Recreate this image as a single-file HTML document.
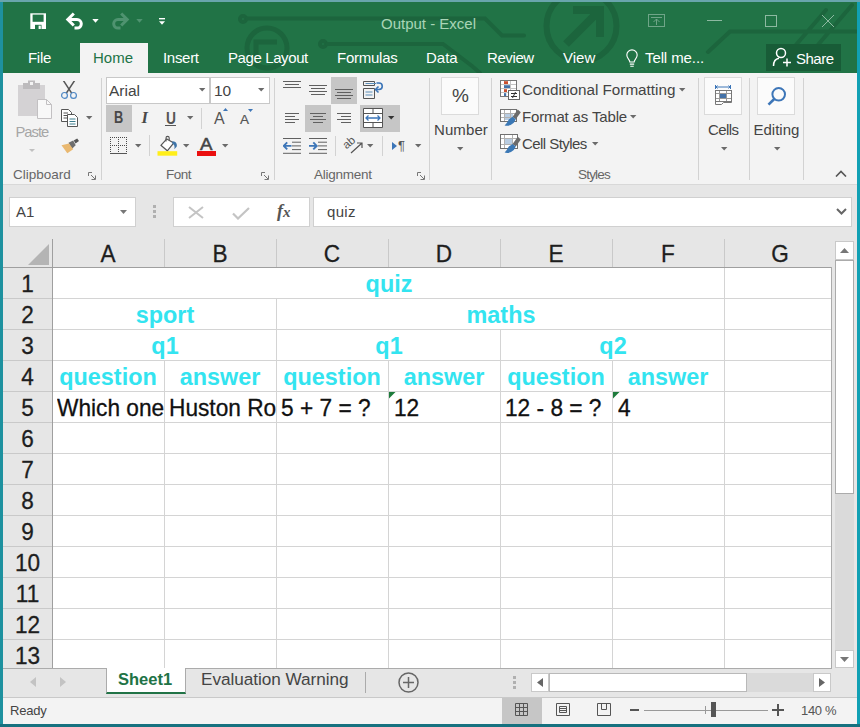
<!DOCTYPE html>
<html>
<head>
<meta charset="utf-8">
<title>Output - Excel</title>
<style>
*{box-sizing:border-box;margin:0;padding:0}
html,body{width:860px;height:727px;overflow:hidden}
body{background:linear-gradient(90deg,#1e919f 0,#1e919f 50%,#11a0b4 50%,#11a0b4 100%);font-family:"Liberation Sans",sans-serif;position:relative}
#win{position:absolute;left:3px;top:2px;width:854px;height:722px;background:#e6e6e6;overflow:hidden}
#pg{position:absolute;left:-3px;top:-2px;width:860px;height:727px}
#pg div,#pg svg{position:absolute}
.t{white-space:nowrap;line-height:1}
.tab{color:#fff;font-size:15px;top:50px}
.rl{color:#666;font-size:13.5px;top:168px}
.rt{color:#444;font-size:15px}
.sep{width:1px;background:#d2d2d2}
.box{background:#fff;border:1px solid #c8c8c8}
.sel{background:#c6c6c6}
.ch{-webkit-text-stroke:0.3px #1e1e1e;color:#1e1e1e;font-size:24px;top:242px;width:112px;text-align:center;transform:scaleX(0.94)}
.rh{-webkit-text-stroke:0.3px #1e1e1e;color:#1e1e1e;font-size:24px;left:3px;width:49px;text-align:center;transform:scaleX(0.94)}
.vl{width:1px;background:#d4d4d4;top:268px;height:400px}
.hl{height:1px;background:#d4d4d4;left:53px;width:779px}
.cy{color:#33e4f0;font-weight:bold;font-size:23.4px;text-align:center}
.cc{overflow:hidden;height:30px}
.ct{-webkit-text-stroke:0.3px #111;color:#111;font-size:24px;transform:scaleX(0.945);transform-origin:left top;left:0;top:0}
</style>
</head>
<body>
<div style="position:absolute;left:0;top:0;width:860px;height:2px;background:#69a5ac"></div>
<div style="position:absolute;left:0;top:724px;width:860px;height:3px;background:#16717f"></div>
<div id="win"><div id="pg">

<div style="left:3px;top:2px;width:854px;height:71px;background:#217346"></div>
<svg style="left:3px;top:2px" width="854" height="71" viewBox="3 2 854 71" fill="none" stroke="#1c653d" stroke-width="4" stroke-linecap="round">
<circle cx="243" cy="19" r="3"/><path d="M247 18.500H485L502 35.500H524"/>
<circle cx="323" cy="44" r="3"/><path d="M327 44H443L472 66L480 73"/>
<circle cx="267" cy="48" r="20" stroke-width="5"/><path d="M256 60V42H277" stroke-width="5" stroke-linecap="butt"/>
<circle cx="581.500" cy="26" r="35" stroke-width="6"/><path d="M566 44L596 14M573 10H600V37" stroke-width="8" stroke-linecap="butt"/>
<path d="M708 52L730 31.500H856M795 46L826 10M817 46L852 5"/>
</svg>
<div style="left:80px;top:43px;width:68px;height:31px;background:#f3f3f3"></div>
<svg style="left:30px;top:13px" width="17" height="17" viewBox="0 0 17 17"><rect x="0.300" y="0.300" width="15.700" height="15.700" fill="#fff"/><rect x="2.600" y="1.600" width="11" height="7.200" fill="#217346"/><rect x="5" y="11.800" width="6.500" height="4.200" fill="#217346"/><rect x="8.600" y="12.600" width="2.200" height="3.400" fill="#fff"/></svg>
<svg style="left:65px;top:12px" width="21" height="19" viewBox="0 0 21 19" fill="none" stroke="#fff" stroke-width="3"><path d="M3.500 7.500H12A4.300 4.300 0 0 1 12 16.100H9.500" stroke-linecap="butt"/><path d="M8.800 1.500L2.800 7.500L8.800 13.500" stroke-linejoin="miter"/></svg>
<svg style="left:92px;top:19px" width="7" height="4"><path d="M0.300 0H6.700L3.500 3.700Z" fill="#fff"/></svg>
<svg style="left:109px;top:12px" width="21" height="19" viewBox="0 0 21 19" fill="none" stroke="#4f9370" stroke-width="3"><path d="M17.500 7.500H9A4.300 4.300 0 0 0 9 16.100H11.500"/><path d="M12.200 1.500L18.200 7.500L12.200 13.500"/></svg>
<svg style="left:136px;top:19px" width="7" height="4"><path d="M0.300 0H6.700L3.500 3.700Z" fill="#4f9370"/></svg>
<svg style="left:159px;top:18px" width="6" height="8"><path d="M0 0.700H6" stroke="#fff" stroke-width="1.400"/><path d="M0 3.200H6L3 6.700Z" fill="#fff"/></svg>
<div class="t" style="left:381px;top:16px;font-size:15px;color:#a9d5b6">Output - Excel</div>
<svg style="left:640px;top:10px" width="200" height="24" viewBox="640 10 200 24" fill="none" stroke="#6fa588" stroke-width="1">
<rect x="648.5" y="14.5" width="16" height="12"/><path d="M651 17.5H662M656.5 25V19M653.5 22L656.5 19L659.5 22"/>
<path d="M707 20.5H722" stroke="#8db9a1"/>
<rect x="765.5" y="15.5" width="11" height="11" stroke="#8db9a1"/>
<path d="M822 15L834 27M834 15L822 27" stroke="#8db9a1"/>
</svg>
<div class="t tab" style="left:28px;color:#fff;letter-spacing:-0.3px">File</div>
<div class="t tab" style="left:93px;color:#217346;letter-spacing:0px">Home</div>
<div class="t tab" style="left:163px;color:#fff;letter-spacing:-0.3px">Insert</div>
<div class="t tab" style="left:228px;color:#fff;letter-spacing:-0.4px">Page Layout</div>
<div class="t tab" style="left:337px;color:#fff;letter-spacing:-0.25px">Formulas</div>
<div class="t tab" style="left:426px;color:#fff;letter-spacing:0px">Data</div>
<div class="t tab" style="left:487px;color:#fff;letter-spacing:-0.4px">Review</div>
<div class="t tab" style="left:563px;color:#fff;letter-spacing:0px">View</div>
<div class="t tab" style="left:645px;color:#fff;letter-spacing:-0.1px">Tell me...</div>
<svg style="left:625px;top:49px" width="14" height="19" viewBox="0 0 16 22" fill="none" stroke="#fff" stroke-width="1.3"><path d="M5.5 15C5.5 12 2 11 2 7A6 6 0 0 1 14 7C14 11 10.5 12 10.5 15Z"/><path d="M5.5 17.5H10.5M6 20H10"/></svg>
<div style="left:766px;top:44px;width:75px;height:27px;background:#185c37"></div>
<svg style="left:772px;top:47px" width="22" height="20" viewBox="0 0 22 20" fill="none" stroke="#fff" stroke-width="1.5"><circle cx="9" cy="6" r="4.5"/><path d="M1.5 19C1.5 13 5 11.5 7 11.2"/><path d="M11 15.5H19M15 11.5V19.5"/></svg>
<div class="t tab" style="left:796px;top:51px;letter-spacing:-0.5px">Share</div>
<div style="left:3px;top:73px;width:854px;height:111px;background:#f3f3f3"></div>
<div style="left:3px;top:184px;width:854px;height:1px;background:#d8d8d8"></div>
<svg style="left:17px;top:80px" width="36" height="40" viewBox="17 80 36 40">
<rect x="18" y="85" width="27" height="31" fill="#d4d2d4"/><rect x="23" y="83" width="17" height="6" fill="#bdbbbd"/><rect x="28" y="80.5" width="7" height="5" fill="#bdbbbd"/><rect x="30" y="82" width="3" height="3" fill="#f3f3f3"/>
<path d="M37.500 99.500H46.500L51.500 104.500V118.500H37.500Z" fill="#f8f8f8" stroke="#c2c0c2"/><path d="M46.500 99.500V104.500H51.500" fill="none" stroke="#c2c0c2"/>
</svg>
<div class="t" style="left:15.500px;top:124.500px;font-size:14.8px;color:#a6a6a6;letter-spacing:-1px">Paste</div>
<svg style="left:29px;top:149.3px" width="7" height="4"><path d="M0 0H6L3.0 3Z" fill="#c0c0c0"/></svg>
<svg style="left:60px;top:80px" width="18" height="20" viewBox="0 0 18 20" fill="none"><path d="M2.800 1L4.600 1L12.300 12.800L11 13.600Z" fill="#555"/><path d="M15.200 1L13.400 1L5.700 12.800L7 13.600Z" fill="#555"/><circle cx="4.500" cy="15.400" r="2.900" stroke="#4e87c4" stroke-width="1.200"/><circle cx="13.500" cy="15.400" r="2.900" stroke="#4e87c4" stroke-width="1.200"/></svg>
<svg style="left:60px;top:108px" width="19" height="20" viewBox="0 0 19 20" fill="#fff" stroke="#555" stroke-width="1"><path d="M1.500 1.500H8.500L11.500 4.500V13.500H1.500Z"/><path d="M3.500 5H8M3.500 7.500H8M3.500 10H7" stroke="#555"/><path d="M7.500 6.500H14.500L17.500 9.500V18.500H7.500Z"/><path d="M9.500 11H15.500M9.500 13.500H15.500M9.500 16H15.500" stroke="#3b7d8d"/></svg>
<svg style="left:86px;top:116.3px" width="7.4" height="4.6"><path d="M0 0H6.4L3.2 3.6Z" fill="#6a6a6a"/></svg>
<svg style="left:61px;top:138px" width="19" height="16" viewBox="0 0 19 16"><path d="M12.700 2.500L16.200 0.400L18 3.100L14.500 5.400Z" fill="#555"/><path d="M7.500 4.800L12.200 2.500L14.700 7.200L11 10.700Z" fill="#6e6e6e"/><path d="M0.500 7.200L8 5.400L12.200 11.300L6.300 15.200Z" fill="#e9b870"/></svg>
<div class="t rl" style="left:13px">Clipboard</div>
<svg style="left:88px;top:172px" width="8" height="8" viewBox="0 0 8 8" fill="none" stroke="#777" stroke-width="1"><path d="M0.5 4V0.5H4"/><path d="M3 3L7 7M7.5 3.5V7.5H3.5"/></svg>
<div class="sep" style="left:101px;top:78px;height:102px"></div>
<div class="box" style="left:106px;top:77px;width:104px;height:27px"></div>
<div class="box" style="left:210px;top:77px;width:60px;height:27px"></div>
<div class="t rt" style="left:109px;top:83px;font-size:15.5px">Arial</div>
<div class="t rt" style="left:214px;top:83px;font-size:15.5px">10</div>
<svg style="left:199px;top:88.3px" width="7.4" height="4.6"><path d="M0 0H6.4L3.2 3.6Z" fill="#6a6a6a"/></svg>
<svg style="left:258px;top:88.3px" width="7.4" height="4.6"><path d="M0 0H6.4L3.2 3.6Z" fill="#6a6a6a"/></svg>
<div class="sel" style="left:106px;top:105px;width:26px;height:27px"></div>
<div class="t" style="left:113.5px;top:109.5px;font-size:16px;font-weight:bold;color:#484848;transform:scaleX(0.8);transform-origin:left top">B</div>
<div class="t" style="left:141.5px;top:109.5px;font-size:16.5px;font-style:italic;font-weight:bold;color:#484848;font-family:'Liberation Serif',serif">I</div>
<div class="t" style="left:165.5px;top:110.5px;font-size:16px;font-weight:bold;color:#555;transform:scaleX(0.86);transform-origin:left top">U</div>
<div style="left:165px;top:125px;width:11px;height:1px;background:#555"></div>
<svg style="left:187px;top:116.3px" width="7.4" height="4.6"><path d="M0 0H6.4L3.2 3.6Z" fill="#6a6a6a"/></svg>
<div class="sep" style="left:201px;top:108px;height:21px"></div>
<div class="t" style="left:214px;top:111px;font-size:16px;color:#555">A</div>
<svg style="left:223px;top:108px" width="5" height="3"><path d="M0 3H5L2.5 0Z" fill="#3d76b8"/></svg>
<div class="t" style="left:240px;top:113px;font-size:13.5px;color:#555;-webkit-text-stroke:0.2px #555">A</div>
<svg style="left:248px;top:109px" width="5" height="3"><path d="M0 0H5L2.5 3Z" fill="#3d76b8"/></svg>
<svg style="left:110px;top:137px" width="17" height="18" viewBox="0 0 17 18" fill="none" stroke="#4a4a4a" stroke-width="1" stroke-dasharray="1 1"><path d="M0 0.500H17M0.500 0V16M8.500 0V16M16.500 0V16M0 8.500H17"/><path d="M0 16.500H17" stroke-dasharray="none" stroke="#555"/></svg>
<svg style="left:135px;top:144.3px" width="7.4" height="4.6"><path d="M0 0H6.4L3.2 3.6Z" fill="#6a6a6a"/></svg>
<div class="sep" style="left:149px;top:135px;height:21px"></div>
<svg style="left:156.500px;top:134px" width="21" height="23" viewBox="0 0 21 23"><path d="M3.900 11.300L9.800 4.900L16.800 8.900L10.300 16.800Z" fill="#fff" stroke="#555" stroke-width="1.200" stroke-linejoin="round"/><path d="M9 7.500V4A1.600 1.600 0 0 1 12.200 4V6.200" stroke="#555" stroke-width="1.100" fill="none"/><path d="M15.300 7.200C18.500 6.800 20.800 10 19.600 12.800L17.300 15.200C18 12.500 17.500 10.500 15.300 9.500Z" fill="#3f74a8"/><rect x="0.500" y="17.200" width="19.700" height="4.500" fill="#ffee1a"/></svg>
<svg style="left:183px;top:144.3px" width="7.4" height="4.6"><path d="M0 0H6.4L3.2 3.6Z" fill="#6a6a6a"/></svg>
<div class="t" style="left:199.500px;top:135.500px;font-size:16.5px;color:#444;-webkit-text-stroke:0.5px #444;transform:scaleX(1.13);transform-origin:left top">A</div>
<div style="left:196.500px;top:151.200px;width:19.500px;height:4.500px;background:#ea0f0f"></div>
<svg style="left:222px;top:144.3px" width="7.4" height="4.6"><path d="M0 0H6.4L3.2 3.6Z" fill="#6a6a6a"/></svg>
<div class="t rl" style="left:166px;letter-spacing:-0.5px">Font</div>
<svg style="left:261px;top:172px" width="8" height="8" viewBox="0 0 8 8" fill="none" stroke="#777" stroke-width="1"><path d="M0.5 4V0.5H4"/><path d="M3 3L7 7M7.5 3.5V7.5H3.5"/></svg>
<div class="sep" style="left:274px;top:78px;height:102px"></div>
<div class="sel" style="left:331px;top:77px;width:26px;height:27px"></div>
<div class="sel" style="left:305px;top:105px;width:26px;height:27px"></div>
<div class="sel" style="left:360px;top:105px;width:40px;height:27px"></div>
<svg style="left:283px;top:81px" width="18" height="11" stroke="#606060" stroke-width="1"><path d="M0.0 0.5H18.0"/><path d="M2.0 3.5H16.0"/><path d="M0.0 6.5H18.0"/></svg>
<svg style="left:309px;top:85px" width="18" height="14" stroke="#606060" stroke-width="1"><path d="M0.0 0.5H18.0"/><path d="M2.0 3.5H16.0"/><path d="M0.0 6.5H18.0"/><path d="M2.0 9.5H16.0"/></svg>
<svg style="left:335px;top:89px" width="18" height="14" stroke="#606060" stroke-width="1"><path d="M0.0 0.5H18.0"/><path d="M2.0 3.5H16.0"/><path d="M0.0 6.5H18.0"/><path d="M2.0 9.5H16.0"/></svg>
<svg style="left:363px;top:81px" width="21" height="19" viewBox="0 0 21 19" fill="none"><path d="M0.500 0.500H11.500V4.500H0.500ZM0.500 7.500H11.500V17.500H0.500Z" stroke="#555"/><path d="M2.500 2.500H13M2.500 11H9.500M2.500 14H9.500" stroke="#5b8db8"/><path d="M13.500 2H16A3.200 3.200 0 0 1 16 8.500H13" stroke="#3d76b8" stroke-width="1.600"/><path d="M15.500 5.500L12.500 8.500L15.500 11.500" stroke="#3d76b8" stroke-width="1.600"/></svg>
<svg style="left:285px;top:113px" width="14" height="14" stroke="#606060" stroke-width="1"><path d="M0 0.5H14"/><path d="M0 3.5H10"/><path d="M0 6.5H14"/><path d="M0 9.5H10"/></svg>
<svg style="left:310px;top:113px" width="16" height="14" stroke="#606060" stroke-width="1"><path d="M0.0 0.5H16.0"/><path d="M3.0 3.5H13.0"/><path d="M0.0 6.5H16.0"/><path d="M3.0 9.5H13.0"/></svg>
<svg style="left:337px;top:113px" width="14" height="14" stroke="#606060" stroke-width="1"><path d="M0 0.5H14"/><path d="M4 3.5H14"/><path d="M0 6.5H14"/><path d="M4 9.5H14"/></svg>
<svg style="left:363px;top:108px" width="20" height="20" viewBox="0 0 20 20" fill="#fff" stroke="#555"><path d="M0.500 0.500H19.500V19.500H0.500Z"/><path d="M0.500 5.500H19.500M0.500 14.500H19.500M10 0.500V5.500M10 14.500V19.500" fill="none"/><path d="M3 10H17M5.500 7.500L3 10L5.500 12.500M14.500 7.500L17 10L14.500 12.500" stroke="#3d76b8" stroke-width="1.300" fill="none"/></svg>
<svg style="left:388px;top:116.3px" width="7.4" height="4.6"><path d="M0 0H6.4L3.2 3.6Z" fill="#333"/></svg>
<svg style="left:283px;top:138px" width="19" height="16" viewBox="0 0 19 16" fill="none" stroke="#606060" stroke-width="1"><path d="M0 0.500H18M9 4.200H18M9 7.900H18M9 11.600H18M0 15.300H18"/><path d="M1 7.900H8.500M4.200 4.400L0.800 7.900L4.200 11.400" stroke="#3d76b8" stroke-width="1.900"/></svg>
<svg style="left:309px;top:138px" width="19" height="16" viewBox="0 0 19 16" fill="none" stroke="#606060" stroke-width="1"><path d="M0 0.500H18M9 4.200H18M9 7.900H18M9 11.600H18M0 15.300H18"/><path d="M0 7.900H7.500M4.300 4.400L7.700 7.900L4.300 11.400" stroke="#3d76b8" stroke-width="1.900"/></svg>
<div class="sep" style="left:335px;top:136px;height:20px"></div>
<div class="t" style="left:347.500px;top:133.500px;font-size:11.5px;color:#555;transform:rotate(-40deg);transform-origin:left bottom;margin-top:6px">ab</div>
<svg style="left:345px;top:140px" width="18" height="15" viewBox="0 0 18 15" fill="none" stroke="#555" stroke-width="1.200"><path d="M6 13L16.500 3.500M12 3H17V8"/></svg>
<svg style="left:367px;top:144.3px" width="7.4" height="4.6"><path d="M0 0H6.4L3.2 3.6Z" fill="#6a6a6a"/></svg>
<div class="sep" style="left:382px;top:136px;height:20px"></div>
<svg style="left:392px;top:142px" width="5" height="8"><path d="M0 0L5 4L0 8Z" fill="#3d76b8"/></svg>
<div class="t" style="left:398px;top:139px;font-size:13px;color:#555">¶</div>
<svg style="left:415px;top:144.3px" width="7.4" height="4.6"><path d="M0 0H6.4L3.2 3.6Z" fill="#6a6a6a"/></svg>
<div class="t rl" style="left:314px;letter-spacing:-0.25px">Alignment</div>
<svg style="left:417px;top:172px" width="8" height="8" viewBox="0 0 8 8" fill="none" stroke="#777" stroke-width="1"><path d="M0.5 4V0.5H4"/><path d="M3 3L7 7M7.5 3.5V7.5H3.5"/></svg>
<div class="sep" style="left:429px;top:78px;height:102px"></div>
<div class="box" style="left:441px;top:77px;width:38px;height:38px;border-color:#dbdbdb;background:#fbfbfb"></div>
<div class="t" style="left:452px;top:86px;font-size:19px;color:#444">%</div>
<div class="t rt" style="left:434px;top:122px;letter-spacing:0.1px">Number</div>
<svg style="left:457px;top:147.3px" width="7.4" height="4.6"><path d="M0 0H6.4L3.2 3.6Z" fill="#6a6a6a"/></svg>
<div class="sep" style="left:491px;top:78px;height:102px"></div>
<svg style="left:500px;top:80px" width="21" height="21" viewBox="0 0 21 21" fill="none"><rect x="0.500" y="0.500" width="16" height="16" fill="#fff" stroke="#777"/><path d="M4.500 1V16M10.500 1V16M1 4.500H16M1 8.500H16M1 12.500H16" stroke="#c4c4c4"/><rect x="4" y="1.200" width="4" height="2.800" fill="#cb4f2e"/><rect x="4" y="5.200" width="6" height="2.800" fill="#4472a8"/><rect x="4" y="9.200" width="3" height="2.800" fill="#cb4f2e"/><rect x="4" y="13.200" width="2.200" height="2.800" fill="#4472a8"/><rect x="8.500" y="10.500" width="11" height="9" fill="#fff" stroke="#666"/><path d="M11 13.500H17M11 16.500H17M15.500 12L12.500 18" stroke="#333"/></svg>
<svg style="left:500px;top:108px" width="21" height="20" viewBox="0 0 21 20" fill="none"><rect x="0.500" y="1.500" width="16" height="12" fill="#fff" stroke="#707070"/><rect x="5" y="6" width="8" height="6" fill="#b9cde2"/><path d="M4.500 2V13M10.500 2V13M1 5.500H16M1 9.500H16" stroke="#b0b0b0"/><path d="M17.800 1.6L20.800 4.2L15.800 11.2L12.600 8.8Z" fill="#6b6b6b"/><path d="M12.600 8.8L15.800 11.2L13.800 14.8Q9.500 18.8 4.600 17.4Q7.400 14.4 8.800 11.4Z" fill="#3b78b5"/></svg>
<svg style="left:500px;top:134px" width="21" height="21" viewBox="0 0 21 21" fill="none"><rect x="0.500" y="0.500" width="17" height="14" fill="#fff" stroke="#707070"/><rect x="5" y="5" width="7.500" height="5" fill="#b9cde2"/><path d="M4.500 1V14M12.500 1V14M1 4.500H17M1 10.500H17" stroke="#b0b0b0"/><path d="M17.800 2.8L20.800 5.4L15.800 12.4L12.600 10.0Z" fill="#6b6b6b"/><path d="M12.600 10.0L15.800 12.4L13.800 16.0Q9.500 20.0 4.600 18.6Q7.400 15.6 8.800 12.6Z" fill="#3b78b5"/></svg>
<div class="t rt" style="left:522px;top:82px;font-size:15.25px">Conditional Formatting</div>
<div class="t rt" style="left:522px;top:109px;letter-spacing:-0.150px">Format as Table</div>
<div class="t rt" style="left:522px;top:136px;letter-spacing:-0.55px">Cell Styles</div>
<svg style="left:679px;top:88.3px" width="7.4" height="4.6"><path d="M0 0H6.4L3.2 3.6Z" fill="#6a6a6a"/></svg>
<svg style="left:630px;top:115.3px" width="7.4" height="4.6"><path d="M0 0H6.4L3.2 3.6Z" fill="#6a6a6a"/></svg>
<svg style="left:592px;top:142.3px" width="7.4" height="4.6"><path d="M0 0H6.4L3.2 3.6Z" fill="#6a6a6a"/></svg>
<div class="t rl" style="left:578px;letter-spacing:-0.8px">Styles</div>
<div class="sep" style="left:698px;top:78px;height:102px"></div>
<div class="box" style="left:704px;top:77px;width:38px;height:38px;border-color:#dbdbdb;background:#fbfbfb"></div>
<svg style="left:714px;top:85px" width="20" height="21" viewBox="0 0 20 21" fill="none"><path d="M1.500 0V4M16.500 0V4M1.500 2H16.500M3.500 0.500L2 2L3.500 3.500M14.500 0.500L16 2L14.500 3.500" stroke="#3d76b8"/><rect x="1.500" y="5.500" width="16" height="11" fill="#fff" stroke="#777"/><path d="M5.500 6V16M12.500 6V16M2 8.500H17M2 13.500H17" stroke="#999"/><rect x="6" y="9" width="6" height="4" fill="#4472a8"/><path d="M1.500 16.500V19.500H7.500L9.500 17.500H17.500V16.500" stroke="#777"/></svg>
<div class="t rt" style="left:708px;top:122px;letter-spacing:-0.600px">Cells</div>
<svg style="left:721px;top:147.3px" width="7.4" height="4.6"><path d="M0 0H6.4L3.2 3.6Z" fill="#6a6a6a"/></svg>
<div class="sep" style="left:749px;top:78px;height:102px"></div>
<div class="box" style="left:757px;top:77px;width:38px;height:38px;border-color:#dbdbdb;background:#fbfbfb"></div>
<svg style="left:766px;top:85px" width="22" height="22" viewBox="0 0 22 22" fill="none" stroke="#3d76b8" stroke-width="2"><circle cx="12.700" cy="9.300" r="6.300"/><path d="M8.200 14L2.500 19.700" stroke-width="2.600"/></svg>
<div class="t rt" style="left:753.5px;top:122px;letter-spacing:0px">Editing</div>
<svg style="left:774px;top:147.3px" width="7.4" height="4.6"><path d="M0 0H6.4L3.2 3.6Z" fill="#6a6a6a"/></svg>
<div class="sep" style="left:803px;top:78px;height:102px"></div>
<svg style="left:835px;top:170px" width="12" height="7" fill="none" stroke="#555" stroke-width="1.600"><path d="M1 6.500L6 1.500L11 6.500"/></svg>
<div class="box" style="left:9px;top:197px;width:127px;height:30px;border-color:#d0d0d0"></div>
<div class="t" style="left:16px;top:204px;font-size:15px;color:#444">A1</div>
<svg style="left:120px;top:210.3px" width="8" height="5"><path d="M0 0H7L3.5 4Z" fill="#777"/></svg>
<div style="left:153px;top:205px;width:3px;height:3px;background:#b0b0b0;box-shadow:0 5px 0 #b0b0b0,0 10px 0 #b0b0b0"></div>
<div class="box" style="left:173px;top:197px;width:137px;height:30px;border-color:#d0d0d0"></div>
<svg style="left:188px;top:206px" width="16" height="13" fill="none" stroke="#c4c4c4" stroke-width="2"><path d="M1 1L15 12M15 1L1 12"/></svg>
<svg style="left:232px;top:207px" width="18" height="13" fill="none" stroke="#c4c4c4" stroke-width="2.200"><path d="M1 6.500L6 11.500L17 1"/></svg>
<div class="t" style="left:277px;top:202px;font-size:18px;font-style:italic;color:#555;font-family:'Liberation Serif',serif"><b>f</b><span style="font-size:15px;font-weight:bold">x</span></div>
<div class="box" style="left:313px;top:197px;width:539px;height:30px;border-color:#d0d0d0"></div>
<div class="t" style="left:327px;top:204px;font-size:15px;color:#444;letter-spacing:0.3px">quiz</div>
<svg style="left:836px;top:208px" width="11" height="7" fill="none" stroke="#666" stroke-width="2"><path d="M1 1L5.500 5.500L10 1"/></svg>
<div style="left:53px;top:268px;width:779px;height:400px;background:#fff"></div>
<svg style="left:28px;top:244px" width="21" height="21"><path d="M21 0V21H0Z" fill="#b4b4b4"/></svg>
<div class="t ch" style="left:52px">A</div>
<div style="left:164px;top:239px;width:1px;height:28px;background:#c9c9c9"></div>
<div class="t ch" style="left:164px">B</div>
<div style="left:276px;top:239px;width:1px;height:28px;background:#c9c9c9"></div>
<div class="t ch" style="left:276px">C</div>
<div style="left:388px;top:239px;width:1px;height:28px;background:#c9c9c9"></div>
<div class="t ch" style="left:388px">D</div>
<div style="left:500px;top:239px;width:1px;height:28px;background:#c9c9c9"></div>
<div class="t ch" style="left:500px">E</div>
<div style="left:612px;top:239px;width:1px;height:28px;background:#c9c9c9"></div>
<div class="t ch" style="left:612px">F</div>
<div style="left:724px;top:239px;width:1px;height:28px;background:#c9c9c9"></div>
<div class="t ch" style="left:724px">G</div>
<div class="t rh" style="top:272px">1</div>
<div style="left:3px;top:298px;width:49px;height:1px;background:#c9c9c9"></div>
<div class="t rh" style="top:303px">2</div>
<div style="left:3px;top:329px;width:49px;height:1px;background:#c9c9c9"></div>
<div class="t rh" style="top:334px">3</div>
<div style="left:3px;top:360px;width:49px;height:1px;background:#c9c9c9"></div>
<div class="t rh" style="top:365px">4</div>
<div style="left:3px;top:391px;width:49px;height:1px;background:#c9c9c9"></div>
<div class="t rh" style="top:396px">5</div>
<div style="left:3px;top:422px;width:49px;height:1px;background:#c9c9c9"></div>
<div class="t rh" style="top:427px">6</div>
<div style="left:3px;top:453px;width:49px;height:1px;background:#c9c9c9"></div>
<div class="t rh" style="top:458px">7</div>
<div style="left:3px;top:484px;width:49px;height:1px;background:#c9c9c9"></div>
<div class="t rh" style="top:489px">8</div>
<div style="left:3px;top:515px;width:49px;height:1px;background:#c9c9c9"></div>
<div class="t rh" style="top:520px">9</div>
<div style="left:3px;top:546px;width:49px;height:1px;background:#c9c9c9"></div>
<div class="t rh" style="top:551px">10</div>
<div style="left:3px;top:577px;width:49px;height:1px;background:#c9c9c9"></div>
<div class="t rh" style="top:582px">11</div>
<div style="left:3px;top:608px;width:49px;height:1px;background:#c9c9c9"></div>
<div class="t rh" style="top:613px">12</div>
<div style="left:3px;top:639px;width:49px;height:1px;background:#c9c9c9"></div>
<div class="t rh" style="top:644px">13</div>
<div class="vl" style="left:164px"></div>
<div class="vl" style="left:276px"></div>
<div class="vl" style="left:388px"></div>
<div class="vl" style="left:500px"></div>
<div class="vl" style="left:612px"></div>
<div class="vl" style="left:724px"></div>
<div class="vl" style="left:836px"></div>
<div class="hl" style="top:298px"></div>
<div class="hl" style="top:329px"></div>
<div class="hl" style="top:360px"></div>
<div class="hl" style="top:391px"></div>
<div class="hl" style="top:422px"></div>
<div class="hl" style="top:453px"></div>
<div class="hl" style="top:484px"></div>
<div class="hl" style="top:515px"></div>
<div class="hl" style="top:546px"></div>
<div class="hl" style="top:577px"></div>
<div class="hl" style="top:608px"></div>
<div class="hl" style="top:639px"></div>
<div style="left:53px;top:268px;width:671px;height:30px;background:#fff"></div>
<div style="left:53px;top:299px;width:223px;height:30px;background:#fff"></div>
<div style="left:277px;top:299px;width:447px;height:30px;background:#fff"></div>
<div style="left:53px;top:330px;width:223px;height:30px;background:#fff"></div>
<div style="left:277px;top:330px;width:223px;height:30px;background:#fff"></div>
<div style="left:501px;top:330px;width:223px;height:30px;background:#fff"></div>
<div style="left:3px;top:267px;width:829px;height:1px;background:#9f9f9f"></div>
<div style="left:52px;top:239px;width:1px;height:429px;background:#9f9f9f"></div>
<div style="left:831px;top:267px;width:1px;height:401px;background:#ababab"></div>
<div style="left:3px;top:668px;width:829px;height:1px;background:#ababab"></div>
<div class="t cy" style="left:53px;width:672px;top:273px">quiz</div>
<div class="t cy" style="left:53px;width:224px;top:304px">sport</div>
<div class="t cy" style="left:277px;width:448px;top:304px">maths</div>
<div class="t cy" style="left:53px;width:224px;top:335px">q1</div>
<div class="t cy" style="left:277px;width:224px;top:335px">q1</div>
<div class="t cy" style="left:501px;width:224px;top:335px">q2</div>
<div class="t cy" style="left:52px;width:112px;top:366px">question</div>
<div class="t cy" style="left:164px;width:112px;top:366px">answer</div>
<div class="t cy" style="left:276px;width:112px;top:366px">question</div>
<div class="t cy" style="left:388px;width:112px;top:366px">answer</div>
<div class="t cy" style="left:500px;width:112px;top:366px">question</div>
<div class="t cy" style="left:612px;width:112px;top:366px">answer</div>
<div class="cc" style="left:57px;width:107px;top:392px"><div class="t ct" style="top:4px">Which one</div></div>
<div class="cc" style="left:169px;width:107px;top:392px"><div class="t ct" style="top:4px">Huston Ro</div></div>
<div class="cc" style="left:281px;width:107px;top:392px"><div class="t ct" style="top:4px">5 + 7 = ?</div></div>
<div class="cc" style="left:394px;width:106px;top:392px"><div class="t ct" style="top:4px">12</div></div>
<div class="cc" style="left:505px;width:107px;top:392px"><div class="t ct" style="top:4px">12 - 8 = ?</div></div>
<div class="cc" style="left:618px;width:106px;top:392px"><div class="t ct" style="top:4px">4</div></div>
<svg style="left:389px;top:392px" width="7" height="7"><path d="M0 0H6.500L0 6.500Z" fill="#1e7b3c"/></svg>
<svg style="left:613px;top:392px" width="7" height="7"><path d="M0 0H6.500L0 6.500Z" fill="#1e7b3c"/></svg>
<div style="left:835px;top:241px;width:19px;height:427px;background:#dadada"></div>
<div class="box" style="left:835px;top:241px;width:19px;height:19px;border-color:#c9c9c9"></div>
<svg style="left:840px;top:248px" width="9" height="5"><path d="M0 5H9L4.500 0Z" fill="#777"/></svg>
<div class="box" style="left:835px;top:260px;width:19px;height:234px;border-color:#ababab"></div>
<div class="box" style="left:835px;top:650px;width:19px;height:18px;border-color:#c9c9c9"></div>
<svg style="left:840px;top:657px" width="9" height="5"><path d="M0 0H9L4.500 5Z" fill="#777"/></svg>
<svg style="left:30px;top:677px" width="6" height="10"><path d="M6 0V10L0 5Z" fill="#c3c3c3"/></svg>
<svg style="left:60px;top:677px" width="6" height="10"><path d="M0 0V10L6 5Z" fill="#c3c3c3"/></svg>
<div style="left:106px;top:668px;width:80px;height:26px;background:#fff;border-left:1px solid #ababab;border-right:1px solid #ababab;border-bottom:2px solid #217346"></div>
<div class="t" style="left:118px;top:671px;font-size:16.500px;font-weight:bold;color:#217346">Sheet1</div>
<div class="t" style="left:201px;top:671px;font-size:17.2px;color:#444;letter-spacing:-0.05px">Evaluation Warning</div>
<div style="left:365px;top:672px;width:1px;height:21px;background:#ababab"></div>
<svg style="left:398px;top:672px" width="21" height="21" fill="none" stroke="#666" stroke-width="1.500"><circle cx="10.500" cy="10.500" r="9.500"/><path d="M5 10.500H16M10.500 5V16"/></svg>
<div style="left:513px;top:676px;width:3px;height:3px;background:#b0b0b0;box-shadow:0 5px 0 #b0b0b0,0 10px 0 #b0b0b0"></div>
<div style="left:531px;top:673px;width:300px;height:19px;background:#dadada"></div>
<div class="box" style="left:531px;top:673px;width:18px;height:19px;border-color:#c9c9c9"></div>
<svg style="left:537px;top:678px" width="6" height="9"><path d="M6 0V9L0 4.500Z" fill="#666"/></svg>
<div class="box" style="left:549px;top:673px;width:198px;height:19px;border-color:#b9b9b9"></div>
<div class="box" style="left:813px;top:673px;width:18px;height:19px;border-color:#c9c9c9"></div>
<svg style="left:819px;top:678px" width="6" height="9"><path d="M0 0V9L6 4.500Z" fill="#666"/></svg>
<div style="left:3px;top:697px;width:854px;height:27px;background:#f3f3f3;border-top:1px solid #c9c9c9"></div>
<div class="t" style="left:10px;top:704px;font-size:13px;color:#444;letter-spacing:-0.2px">Ready</div>
<div class="sel" style="left:502px;top:698px;width:40px;height:26px"></div>
<svg style="left:515px;top:703px" width="13" height="13" fill="none" stroke="#555"><path d="M0.500 0.500H12.500V12.500H0.500ZM0.500 4.500H12.500M0.500 8.500H12.500M4.500 0.500V12.500M8.500 0.500V12.500"/></svg>
<svg style="left:556px;top:703px" width="14" height="13" fill="none" stroke="#555"><path d="M0.500 0.500H13.500V12.500H0.500Z"/><path d="M3.500 3.500H10.500V9.500H3.500ZM3.500 5.500H10.500M3.500 7.500H10.500"/></svg>
<svg style="left:597px;top:703px" width="14" height="13" fill="none" stroke="#555"><path d="M0.500 0.500H13.500V12.500H0.500Z"/><path d="M4.500 0.500V6.500H9.500V0.500"/></svg>
<div style="left:630px;top:709px;width:9px;height:2px;background:#555"></div>
<div style="left:644px;top:710px;width:124px;height:1px;background:#999"></div>
<div style="left:705px;top:706px;width:1px;height:8px;background:#999"></div>
<div style="left:711px;top:702px;width:5px;height:15px;background:#555"></div>
<div style="left:772px;top:709px;width:12px;height:2px;background:#555"></div>
<div style="left:777px;top:704px;width:2px;height:12px;background:#555"></div>
<div class="t" style="left:801px;top:704px;font-size:13px;color:#555;letter-spacing:-0.3px">140 %</div>
</div></div>
</body>
</html>
